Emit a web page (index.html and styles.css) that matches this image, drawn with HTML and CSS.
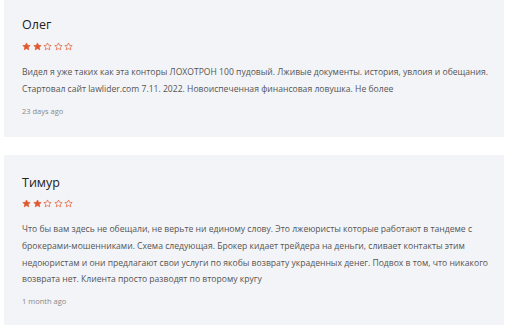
FILE: index.html
```html
<!DOCTYPE html>
<html lang="ru">
<head>
<meta charset="utf-8">
<link rel="stylesheet" href="styles.css">
</head>
<body>
<div class="list">
  <div class="review">
    <div class="name">Олег</div>
    <div class="stars">
      <svg viewBox="0 0 24 24" class="star full"><path d="M12 2.5l2.9 6.3 6.9.7-5.2 4.6 1.5 6.8L12 17.4l-6.1 3.5 1.5-6.8-5.2-4.6 6.9-.7z"/></svg>
      <svg viewBox="0 0 24 24" class="star full"><path d="M12 2.5l2.9 6.3 6.9.7-5.2 4.6 1.5 6.8L12 17.4l-6.1 3.5 1.5-6.8-5.2-4.6 6.9-.7z"/></svg>
      <svg viewBox="0 0 24 24" class="star"><path d="M12 2.5l2.9 6.3 6.9.7-5.2 4.6 1.5 6.8L12 17.4l-6.1 3.5 1.5-6.8-5.2-4.6 6.9-.7z"/></svg>
      <svg viewBox="0 0 24 24" class="star"><path d="M12 2.5l2.9 6.3 6.9.7-5.2 4.6 1.5 6.8L12 17.4l-6.1 3.5 1.5-6.8-5.2-4.6 6.9-.7z"/></svg>
      <svg viewBox="0 0 24 24" class="star"><path d="M12 2.5l2.9 6.3 6.9.7-5.2 4.6 1.5 6.8L12 17.4l-6.1 3.5 1.5-6.8-5.2-4.6 6.9-.7z"/></svg>
    </div>
    <p class="text">Видел я уже таких как эта конторы ЛОХОТРОН 100 пудовый. Лживые документы. история, увлоия и обещания. Стартовал сайт lawlider.com 7.11. 2022. Новоиспеченная финансовая ловушка. Не более</p>
    <div class="date">23 days ago</div>
  </div>
  <div class="review">
    <div class="name">Тимур</div>
    <div class="stars">
      <svg viewBox="0 0 24 24" class="star full"><path d="M12 2.5l2.9 6.3 6.9.7-5.2 4.6 1.5 6.8L12 17.4l-6.1 3.5 1.5-6.8-5.2-4.6 6.9-.7z"/></svg>
      <svg viewBox="0 0 24 24" class="star full"><path d="M12 2.5l2.9 6.3 6.9.7-5.2 4.6 1.5 6.8L12 17.4l-6.1 3.5 1.5-6.8-5.2-4.6 6.9-.7z"/></svg>
      <svg viewBox="0 0 24 24" class="star"><path d="M12 2.5l2.9 6.3 6.9.7-5.2 4.6 1.5 6.8L12 17.4l-6.1 3.5 1.5-6.8-5.2-4.6 6.9-.7z"/></svg>
      <svg viewBox="0 0 24 24" class="star"><path d="M12 2.5l2.9 6.3 6.9.7-5.2 4.6 1.5 6.8L12 17.4l-6.1 3.5 1.5-6.8-5.2-4.6 6.9-.7z"/></svg>
      <svg viewBox="0 0 24 24" class="star"><path d="M12 2.5l2.9 6.3 6.9.7-5.2 4.6 1.5 6.8L12 17.4l-6.1 3.5 1.5-6.8-5.2-4.6 6.9-.7z"/></svg>
    </div>
    <p class="text">Что бы вам здесь не обещали, не верьте ни единому слову. Это лжеюристы которые работают в тандеме с брокерами-мошенниками. Схема следующая. Брокер кидает трейдера на деньги, сливает контакты этим недоюристам и они предлагают свои услуги по якобы возврату украденных денег. Подвох в том, что никакого возврата нет. Клиента просто разводят по второму кругу</p>
    <div class="date">1 month ago</div>
  </div>
</div>
</body>
</html>
```
FILE: styles.css
```css
html, body {
  margin: 0;
  padding: 0;
  background: #ffffff;
}
body {
  font-family: "Open Sans", "Liberation Sans", sans-serif;
  overflow: hidden;
}
.list {
  display: flex;
  flex-direction: column;
  gap: 18px;
  margin: -2px 8px 0 4px;
}
.review {
  background: #f3f4f7;
  padding: 17px 10px 0 18px;
  height: 170px;
  box-sizing: border-box;
}
.review:first-child {
  height: 139px;
}
.name {
  font-size: 12.5px;
  color: #222;
  line-height: 20px;
  height: 20px;
}
.review + .review .name {
  margin-top: 1px;
  margin-bottom: -1px;
}
.stars {
  display: flex;
  gap: 1.6px;
  margin-top: 7px;
  height: 10px;
}
.star {
  width: 9px;
  height: 9px;
  fill: none;
  stroke: #e0582e;
  stroke-width: 1.8;
  stroke-linejoin: round;
}
.star.full {
  fill: #e0582e;
}
.text {
  margin: 12px 0 0 0;
  font-size: 8.6px;
  line-height: 16.8px;
  color: #555;
}
.date {
  margin-top: 7px;
  font-size: 7.5px;
  color: #888;
  line-height: 12px;
}
```
